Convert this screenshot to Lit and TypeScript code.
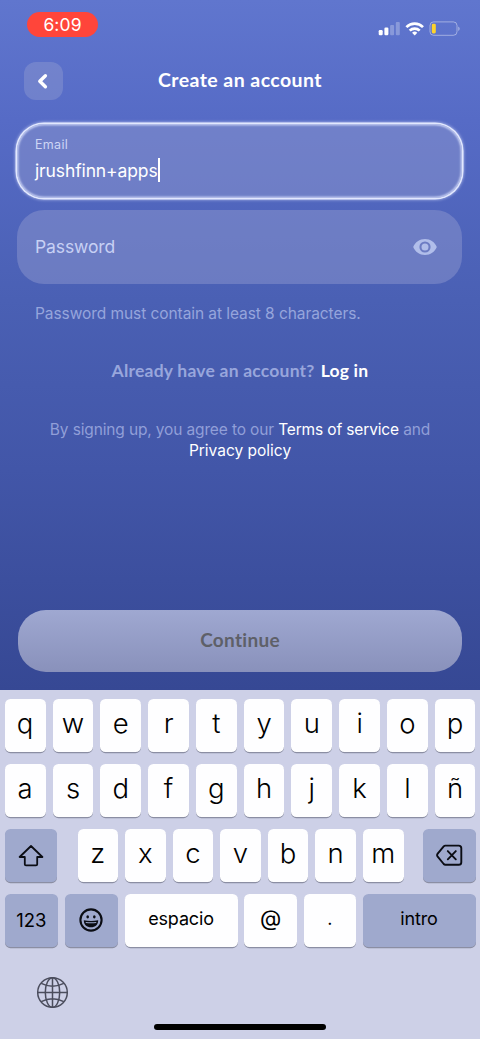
import { LitElement, html, css, svg } from "lit";
import { customElement, property } from "lit/decorators.js";

@customElement("status-bar")
class StatusBar extends LitElement {
  static styles = css`
    :host { display: flex; justify-content: space-between; align-items: flex-start; height: 62px; padding: 12px 19px 0 27px; box-sizing: border-box; }
    .time { width: 71px; height: 25px; border-radius: 13px; background: #ff453a; color: #fff; font: 400 17.5px/26px Inter, sans-serif; letter-spacing: 0.1px; text-align: center; }
    .icons { display: block; margin-top: 9px; }
  `;
  render() {
    return html`
      <div class="time">6:09</div>
      <svg class="icons" width="83" height="16" viewBox="0 0 83 16" fill="#fff">
        <rect x="0.7" y="9" width="4" height="5.2" rx="1.2" />
        <rect x="6.4" y="6.6" width="4" height="7.6" rx="1.2" />
        <rect x="12.1" y="4" width="4" height="10.2" rx="1" opacity=".27" />
        <rect x="17.8" y="1" width="4" height="13.2" rx="1" opacity=".27" />
        <g fill="none" stroke="#fff" stroke-width="2.7">
          <path d="M28.4 6.1a11.8 11.8 0 0 1 16.6 0" />
          <path d="M31.7 9.6a7.2 7.2 0 0 1 10 0" />
        </g>
        <path d="M36.7 14.4l-2.6-2.7a3.8 3.8 0 0 1 5.2 0z" />
        <rect x="52" y="0.9" width="27" height="13.4" rx="3.6" fill="none" stroke="#fff" stroke-opacity=".42" />
        <path d="M80.3 5.4v4.5c1.8-.7 1.8-3.8 0-4.5z" opacity=".5" />
        <rect x="53.8" y="2.7" width="4" height="9.8" rx="1.4" fill="#fdd32b" />
      </svg>
    `;
  }
}

@customElement("form-field")
class FormField extends LitElement {
  @property() label = "";
  @property() value = "";
  @property({ type: Boolean, reflect: true }) focused = false;
  @property({ type: Boolean }) secret = false;
  static styles = css`
    :host { display: flex; align-items: center; justify-content: space-between; height: 74px; padding: 0 24px 0 18px; box-sizing: border-box; border-radius: 27px; background: rgba(140, 150, 205, 0.5); font-family: Inter, sans-serif; }
    :host([focused]) { box-shadow: 0 0 0 1.5px #e2e8fe, 0 0 3px 2px rgba(222, 229, 255, 0.6), inset 0 0 2px 1.5px rgba(222, 229, 255, 0.7); }
    .label { font-size: 12.5px; line-height: 16px; letter-spacing: 0.3px; color: #ced6f5; }
    .line { display: flex; align-items: center; height: 26px; margin: 5px 0 1px; }
    .value { font-size: 17.5px; line-height: 26px; letter-spacing: -0.12px; color: #fff; }
    .caret { width: 2px; height: 24px; background: #fff; margin-top: -3px; }
    .placeholder { font-size: 17.5px; line-height: 24px; letter-spacing: -0.12px; color: #c7d0f4; }
    .eye { display: block; }
  `;
  render() {
    if (this.value) {
      return html`<div>
        <div class="label">${this.label}</div>
        <div class="line"><span class="value">${this.value}</span><span class="caret"></span></div>
      </div>`;
    }
    return html`
      <span class="placeholder">${this.label}</span>
      ${this.secret
        ? html`<svg class="eye" width="26" height="18" viewBox="0 0 26 18">
            <path fill="#b1beea" fill-rule="evenodd" d="M13 1C7.6 1 3.2 4.2 1.2 9c2 4.8 6.4 8 11.8 8s9.8-3.2 11.8-8C22.8 4.2 18.4 1 13 1zm0 13.6a5.6 5.6 0 1 1 0-11.2 5.6 5.6 0 0 1 0 11.2zm0-2.1a3.5 3.5 0 1 0 0-7 3.5 3.5 0 0 0 0 7z" />
          </svg>`
        : ""}
    `;
  }
}

const icons = {
  shift: svg`<svg width="26" height="24" viewBox="0 0 26 24" fill="none" stroke="#0b0d14" stroke-width="1.8" stroke-linejoin="round"><path d="M13 3 1.6 14h5.2v7.2q0 1.2 1.2 1.2h10q1.2 0 1.2-1.2V14h5.200z" /></svg>`,
  backspace: svg`<svg width="27" height="22" viewBox="0 0 27 22" fill="none" stroke="#0b0d14" stroke-width="1.9" stroke-linejoin="round" stroke-linecap="round"><path d="M9.3 1.6h13.4q2.600 0 2.600 2.600v14q0 2.600-2.600 2.600H9.300q-.9 0-1.600-.8L1.700 12.700q-1.200-1.500 0-3l6-7.300q.7-.8 1.600-.8z" /><path d="m11.800 7.100 8 8.200m0-8.200-8 8.200" /></svg>`,
  emoji: svg`<svg width="24" height="24" viewBox="0 0 24 24" fill="#0b0d14"><circle cx="12" cy="12" r="10.600" fill="none" stroke="#0b0d14" stroke-width="2.100" /><ellipse cx="8.700" cy="8.800" rx="1.300" ry="1.600" /><ellipse cx="15.300" cy="8.800" rx="1.300" ry="1.600" /><path d="M4.800 12.300q7.200 1.500 14.400 0c0 4.500-3 7-7.200 7s-7.200-2.500-7.200-7z" /><path d="M6.600 13.900q5.400.9 10.800 0l-.3 1q-5.100.8-10.200 0z" fill="#9fabcf" /></svg>`,
};

@customElement("key-board")
class KeyBoard extends LitElement {
  static styles = css`
    :host { display: block; height: 349px; box-sizing: border-box; padding: 9px 4.5px 0; background: #cdd0e7; font-family: Inter, sans-serif; color: #000; }
    .rows { display: flex; flex-direction: column; gap: 12.5px; }
    .row { display: grid; grid-template-columns: 41.2px repeat(9, 1fr); column-gap: 7px; }
    .row.third { grid-template-columns: 52.5px 1fr 52.5px; column-gap: 19.5px; }
    .letters { display: grid; grid-template-columns: repeat(7, 1fr); column-gap: 7px; padding-left: 1px; }
    .row.bottom { grid-template-columns: 53.5px 53.5px 113px 53px 52.5px 1fr; column-gap: 6.5px; }
    .key { display: flex; align-items: center; justify-content: center; height: 52.5px; box-sizing: border-box; padding-bottom: 4px; border-radius: 5.5px; background: #fefeff; box-shadow: 0 1.2px 0.5px #8b8ea3; font-size: 27.5px; font-weight: 350; }
    .special { background: #9fa9cd; padding-bottom: 0; }
    .word { font-size: 18px; font-weight: 400; letter-spacing: -0.15px; padding-bottom: 3px; }
    .num { font-size: 18.5px; font-weight: 400; letter-spacing: -0.1px; }
    .at { font-size: 22px; font-weight: 400; }
    .globe { display: block; margin: 29.5px 0 0 31.5px; }
    .home { width: 172px; height: 6px; border-radius: 3px; background: #000; margin: 15px auto 0; }
  `;
  private key(c: string) {
    return html`<div class="key">${c}</div>`;
  }
  render() {
    return html`
      <div class="rows">
        <div class="row">${[..."qwertyuiop"].map((c) => this.key(c))}</div>
        <div class="row">${[..."asdfghjklñ"].map((c) => this.key(c))}</div>
        <div class="row third">
          <div class="key special">${icons.shift}</div>
          <div class="letters">${[..."zxcvbnm"].map((c) => this.key(c))}</div>
          <div class="key special">${icons.backspace}</div>
        </div>
        <div class="row bottom">
          <div class="key special num">123</div>
          <div class="key special">${icons.emoji}</div>
          <div class="key word">espacio</div>
          <div class="key at">@</div>
          <div class="key word">.</div>
          <div class="key special word">intro</div>
        </div>
      </div>
      <svg class="globe" width="33" height="33" viewBox="0 0 33 33" fill="none" stroke="#4b4d5d" stroke-width="1.5">
        <circle cx="16.5" cy="16.5" r="14.8" />
        <ellipse cx="16.5" cy="16.5" rx="7.2" ry="14.8" />
        <path d="M16.5 1.7v29.6M1.7 16.5h29.600M5.200 7.400q11.300 5.600 22.600 0M5.200 25.600q11.300-5.600 22.600 0" />
      </svg>
      <div class="home"></div>
    `;
  }
}

@customElement("app-root")
class AppRoot extends LitElement {
  static styles = css`
    :host { display: flex; flex-direction: column; width: 480px; height: 1039px; overflow: hidden; font-family: Inter, sans-serif; }
    .screen { height: 690px; display: flex; flex-direction: column; background: linear-gradient(#6076ce 0, #566bc6 120px, #4a60b4 300px, #4256a8 470px, #364894 690px); }
    .header { display: grid; grid-template-columns: 38.5px 1fr 38.5px; align-items: center; height: 38px; padding: 0 24px; }
    .back { display: flex; align-items: center; justify-content: center; height: 38px; border-radius: 12px; background: rgba(150, 160, 210, 0.4); }
    .title { text-align: center; font: 700 19.5px/24px Lato, sans-serif; letter-spacing: 0.44px; color: #fff; margin-top: -3px; }
    .fields { display: flex; flex-direction: column; gap: 12px; padding: 24px 18px 0 17px; }
    .hint { margin: 20px 35px 0; font-size: 15.5px; line-height: 20px; letter-spacing: -0.07px; color: #96a5dc; white-space: nowrap; }
    .login { display: flex; justify-content: center; gap: 6px; margin-top: 35px; font: 700 17.5px/24px Lato, sans-serif; letter-spacing: 0.22px; color: #98a6dc; }
    .strong { color: #fff; }
    .terms { margin-top: 36px; text-align: center; font-size: 15.5px; line-height: 21px; letter-spacing: -0.14px; color: #919fd8; white-space: nowrap; }
    .policy { letter-spacing: 0; }
    .cta { display: flex; align-items: center; justify-content: center; height: 61.5px; margin: auto 18px 18.5px; border-radius: 28px; background: linear-gradient(#9fa8d1, #8991bb); font: 700 19px/24px Lato, sans-serif; letter-spacing: 0.3px; font-variant-ligatures: none; color: #5e6068; padding-bottom: 2px; box-sizing: border-box; }
  `;
  render() {
    return html`
      <div class="screen">
        <status-bar></status-bar>
        <div class="header">
          <div class="back">
            <svg width="12" height="18" viewBox="0 0 12 18" fill="none" stroke="#fff" stroke-width="3.4" stroke-linecap="round" stroke-linejoin="round"><path d="M8.400 3.700 2.800 9.200l5.600 5.500" /></svg>
          </div>
          <div class="title">Create an account</div>
        </div>
        <div class="fields">
          <form-field label="Email" value="jrushfinn+apps" focused></form-field>
          <form-field label="Password" secret></form-field>
        </div>
        <div class="hint">Password must contain at least 8 characters.</div>
        <div class="login"><span>Already have an account?</span><span class="strong">Log in</span></div>
        <div class="terms">
          By signing up, you agree to our <span class="strong">Terms of service</span> and<br /><span class="strong policy">Privacy policy</span>
        </div>
        <div class="cta">Continue</div>
      </div>
      <key-board></key-board>
    `;
  }
}
